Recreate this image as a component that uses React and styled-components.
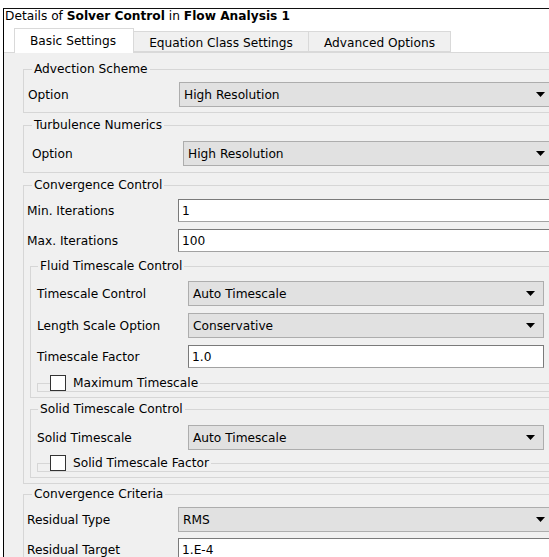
import React from "react";
import styled, { createGlobalStyle } from "styled-components";

const GlobalStyle = createGlobalStyle`
  html, body {
    margin: 0;
    padding: 0;
    background: #ffffff;
    overflow: hidden;
  }
  body {
    font-family: "DejaVu Sans", Verdana, sans-serif;
    font-size: 12.2px;
    color: #000;
  }
`;

// Outer details panel with the dark frame on the left and top
const Window = styled.div`
  width: 600px;
  margin: 8px 0 0 3px;
  border-left: 1px solid #000;
  border-top: 1px solid #111;
`;

const Title = styled.div`
  height: 14px;
  line-height: 14px;
  padding-left: 1px;
  white-space: nowrap;
  background: #fff;
`;

const Strong = styled.b`
  font-weight: bold;
`;

const TabStrip = styled.div`
  display: flex;
  align-items: flex-end;
  height: 29px;
  padding-left: 10px;
  background: #fff;
`;

const Tab = styled.div`
  position: relative;
  z-index: ${({ $active }) => ($active ? 2 : 1)};
  display: flex;
  align-items: center;
  box-sizing: border-box;
  height: ${({ $active }) => ($active ? 25 : 21)}px;
  margin-bottom: ${({ $active }) => ($active ? -1 : 0)}px;
  margin-left: -1px;
  padding: ${({ $active }) => ($active ? "0 17px 0 15px" : "2px 15px 0 15px")};
  background: ${({ $active }) => ($active ? "#ffffff" : "#f0f0f0")};
  border: 1px solid #d9d9d9;
  border-bottom: ${({ $active }) => ($active ? "none" : "1px solid #d9d9d9")};
  white-space: nowrap;

  &:first-child {
    margin-left: 0;
  }
`;

const TabPage = styled.div`
  background: #f0f0f0;
  border-top: 1px solid #d9d9d9;
  padding: 0 0 40px 19px;
`;

// Group box; spacing varies from group to group
const Group = styled.fieldset`
  display: flex;
  flex-direction: column;
  gap: ${({ $gap = 7 }) => $gap}px;
  min-width: 0;
  margin: ${({ $top = 5 }) => $top}px ${({ $right = 0 }) => $right}px 0
    ${({ $left = 0 }) => $left}px;
  padding: ${({ $padTop = 6 }) => $padTop}px 0
    ${({ $padBottom = 5 }) => $padBottom}px 0;
  border: 1px solid #d6d6d6;
`;

const Caption = styled.legend`
  margin-left: ${({ $offset = 8 }) => $offset}px;
  padding: 0 2px;
  line-height: 14px;
  white-space: nowrap;
`;

const CheckCaption = styled.legend`
  display: flex;
  align-items: center;
  gap: 7px;
  height: 16px;
  margin-left: 12px;
  padding: 0 2px 0 0;
  white-space: nowrap;
`;

const CheckBox = styled.span`
  display: block;
  box-sizing: border-box;
  width: 16px;
  height: 16px;
  background: #fff;
  border: 1px solid #333;
`;

const Row = styled.div`
  display: grid;
  grid-template-columns: 151px 1fr;
  align-items: center;
  padding-left: ${({ $indent }) => $indent}px;
  padding-right: ${({ $trail = 5 }) => $trail}px;
`;

const Label = styled.span`
  white-space: nowrap;
`;

const Combo = styled.div`
  display: flex;
  align-items: center;
  justify-content: space-between;
  box-sizing: border-box;
  height: 25px;
  padding: 0 8px 0 4px;
  background: #e1e1e1;
  border: 1px solid #adadad;
  white-space: nowrap;
`;

const Field = styled.div`
  display: flex;
  align-items: center;
  box-sizing: border-box;
  height: 23px;
  padding-left: 3px;
  background: #fff;
  border: 1px solid #7a7a7a;
  border-bottom-color: #a2a2a2;
`;

const Arrow = () => (
  <svg width="9" height="5" viewBox="0 0 9 5">
    <polygon points="0,0 9,0 4.5,5" fill="#000" />
  </svg>
);

const Choice = ({ label, value, indent, trail }) => (
  <Row $indent={indent} $trail={trail}>
    <Label>{label}</Label>
    <Combo>
      <span>{value}</span>
      <Arrow />
    </Combo>
  </Row>
);

const Entry = ({ label, value, indent, trail }) => (
  <Row $indent={indent} $trail={trail}>
    <Label>{label}</Label>
    <Field>{value}</Field>
  </Row>
);

const Toggle = ({ label }) => (
  <Group $top={0} $left={6} $padTop={0} $padBottom={0}>
    <CheckCaption>
      <CheckBox />
      {label}
    </CheckCaption>
  </Group>
);

export default function App() {
  return (
    <>
      <GlobalStyle />
      <Window>
        <Title>
          Details of <Strong>Solver Control</Strong> in{" "}
          <Strong>Flow Analysis 1</Strong>
        </Title>
        <TabStrip>
          <Tab $active>Basic Settings</Tab>
          <Tab>Equation Class Settings</Tab>
          <Tab>Advanced Options</Tab>
        </TabStrip>

        <TabPage>
          <Group $top={9} $right={44} $padTop={6} $padBottom={5}>
            <Caption>Advection Scheme</Caption>
            <Choice label="Option" value="High Resolution" indent={4} />
          </Group>

          <Group $right={44} $padTop={9} $padBottom={6}>
            <Caption>Turbulence Numerics</Caption>
            <Choice label="Option" value="High Resolution" indent={8} />
          </Group>

          <Group $right={44} $padTop={7} $padBottom={5} $gap={7}>
            <Caption>Convergence Control</Caption>
            <Entry label="Min. Iterations" value="1" indent={3} />
            <Entry label="Max. Iterations" value="100" indent={3} />

            <Group $top={0} $left={6} $right={1} $padTop={8} $padBottom={5}>
              <Caption $offset={7}>Fluid Timescale Control</Caption>
              <Choice
                label="Timescale Control"
                value="Auto Timescale"
                indent={6}
                trail={13}
              />
              <Choice
                label="Length Scale Option"
                value="Conservative"
                indent={6}
                trail={13}
              />
              <Entry
                label="Timescale Factor"
                value="1.0"
                indent={6}
                trail={13}
              />
              <Toggle label="Maximum Timescale" />
            </Group>

            <Group
              $top={-3}
              $left={6}
              $right={1}
              $padTop={9}
              $padBottom={5}
              $gap={5}
            >
              <Caption $offset={7}>Solid Timescale Control</Caption>
              <Choice
                label="Solid Timescale"
                value="Auto Timescale"
                indent={6}
                trail={13}
              />
              <Toggle label="Solid Timescale Factor" />
            </Group>
          </Group>

          <Group $top={3} $right={44} $padTop={6} $padBottom={5} $gap={6}>
            <Caption>Convergence Criteria</Caption>
            <Choice label="Residual Type" value="RMS" indent={3} />
            <Entry label="Residual Target" value="1.E-4" indent={3} />
          </Group>
        </TabPage>
      </Window>
    </>
  );
}
